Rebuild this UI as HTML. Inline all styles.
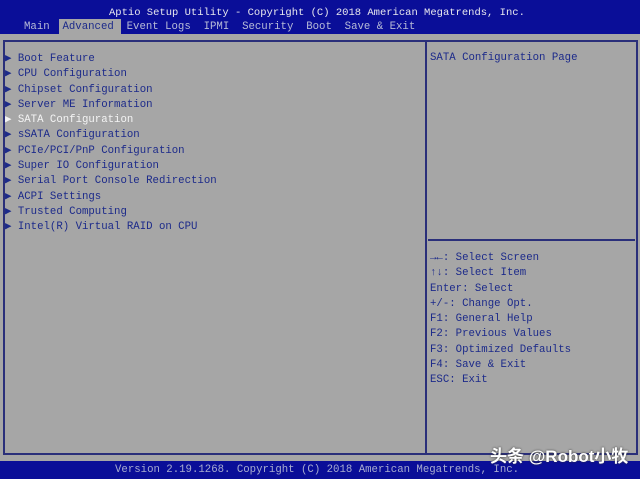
<!DOCTYPE html><html><head><style>
body{margin:0;width:640px;height:479px;background:#a6a6a6;position:relative;overflow:hidden;font-family:"Liberation Mono",monospace;font-size:10.7px;}
.t{position:absolute;white-space:pre;line-height:12px;}
#top{position:absolute;left:0;top:0;width:640px;height:34px;background:#0a0e98;}
#bot{position:absolute;left:0;top:461px;width:640px;height:18px;background:#0a0e98;}
.box{position:absolute;border:2px solid #2a2f7a;}
.i{color:#1c2a8a;}
</style></head><body>
<div id="top"></div>
<div class="t" style="left:109px;top:7px;color:#e8e8ee;font-size:10.5px">Aptio Setup Utility - Copyright (C) 2018 American Megatrends, Inc.</div>
<div style="position:absolute;left:59px;top:19px;width:62px;height:15px;background:#a6a6a6"></div>
<div class="t" style="left:24px;top:21px;color:#b8bcd8">Main  <span style="color:#1c2a8a">Advanced</span>  Event Logs  IPMI  Security  Boot  Save &amp; Exit</div>
<div class="box" style="left:3px;top:40px;width:420px;height:411px"></div>
<div class="box" style="left:425px;top:40px;width:209px;height:411px"></div>
<div style="position:absolute;left:428px;top:239px;width:207px;height:2px;background:#2a2f7a"></div>
<div class="t i" style="left:5px;top:52px;line-height:15.3px">▶ Boot Feature
▶ CPU Configuration
▶ Chipset Configuration
▶ Server ME Information
<span style="color:#f4f4f4">▶ SATA Configuration</span>
▶ sSATA Configuration
▶ PCIe/PCI/PnP Configuration
▶ Super IO Configuration
▶ Serial Port Console Redirection
▶ ACPI Settings
▶ Trusted Computing
▶ Intel(R) Virtual RAID on CPU</div>
<div class="t i" style="left:430px;top:52px">SATA Configuration Page</div>
<div class="t i" style="left:430px;top:251px;line-height:15.3px"><b>→←</b>: Select Screen
<b>↑↓</b>: Select Item
Enter: Select
+/-: Change Opt.
F1: General Help
F2: Previous Values
F3: Optimized Defaults
F4: Save &amp; Exit
ESC: Exit</div>
<div id="bot"></div>
<div class="t" style="left:115px;top:464px;color:#a8acd0">Version 2.19.1268. Copyright (C) 2018 American Megatrends, Inc.</div>
<div class="t" style="left:490px;top:446px;font-family:'Liberation Sans','Noto Sans CJK SC',sans-serif;font-size:17px;font-weight:bold;line-height:21px;color:#fff;text-shadow:0 0 2px #333">头条 @Robot小牧</div>
</body></html>
